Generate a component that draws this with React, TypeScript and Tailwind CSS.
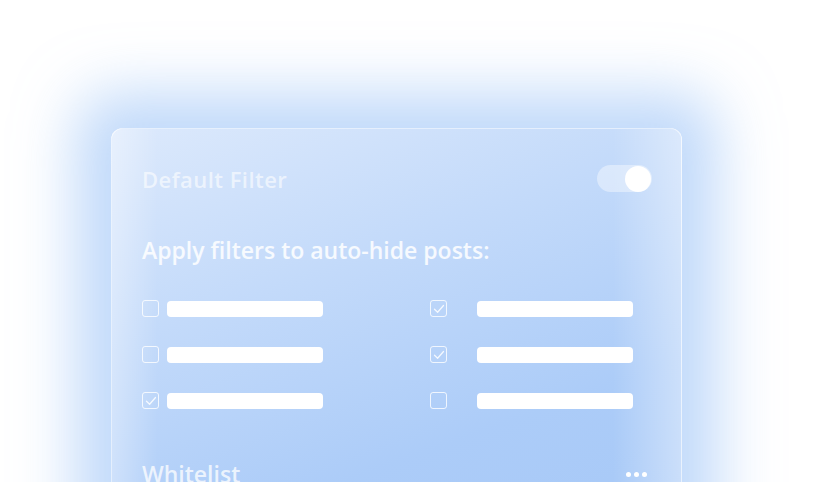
import React from "react";

const Check = ({ checked }: { checked: boolean }) => (
  <div className="w-[17px] h-[17px] rounded-[3px] border-[1.5px] border-white/80 flex items-center justify-center shrink-0">
    {checked && (
      <svg width="12" height="10" viewBox="0 0 12 10" fill="none">
        <path d="M1.5 5.2 L4.6 8.2 L10.5 1.5" stroke="white" strokeOpacity="0.85" strokeWidth="1.3" strokeLinecap="round" strokeLinejoin="round" />
      </svg>
    )}
  </div>
);

const Row = ({ checked, wide }: { checked: boolean; wide?: boolean }) => (
  <div className={`flex items-center h-[17px] ${wide ? "gap-[30px]" : "gap-2"}`}>
    <Check checked={checked} />
    <div className="w-[156px] h-[16px] rounded-[4px] bg-white" />
  </div>
);

export default function App() {
  return (
    <div className="w-[828px] h-[482px] overflow-hidden bg-white relative" style={{ fontFamily: '"Open Sans", "Noto Sans", sans-serif' }}>
      <div className="ml-[111px] mt-[128px] w-[571px] h-[420px] rounded-[12px] border border-white/70 bg-[linear-gradient(160deg,#dce9fc_0%,#c3dafa_35%,#acccf8_70%,#a6c8f7_100%)] shadow-[0_0_60px_35px_rgba(140,185,245,0.55)] relative overflow-hidden">
        <div className="absolute inset-0 bg-[linear-gradient(90deg,rgba(255,255,255,0.35)_0%,rgba(255,255,255,0)_8%,rgba(255,255,255,0)_88%,rgba(255,255,255,0.4)_100%)]" />
        <div className="relative px-[30px] pt-[36px]">
          <div className="flex items-center justify-between h-[27px]">
            <span className="text-[22px] font-semibold leading-none text-white/60 tracking-[0.45px]">Default Filter</span>
            <div className="w-[55px] h-[27px] rounded-full bg-white/40 flex items-center justify-end pr-[1px] -mr-[1px]">
              <div className="w-[26px] h-[26px] rounded-full bg-white" />
            </div>
          </div>
          <div className="mt-[47px] text-[23px] font-semibold leading-none text-white/85">Apply filters to auto-hide posts:</div>
          <div className="mt-[38px] grid grid-cols-[288px_1fr] gap-y-[29px]">
            <Row checked={false} />
            <Row checked={true} wide />
            <Row checked={false} />
            <Row checked={true} wide />
            <Row checked={true} />
            <Row checked={false} wide />
          </div>
          <div className="mt-[54px] flex items-center justify-between">
            <span className="text-[23px] font-semibold leading-none text-white/75">Whitelist</span>
            <div className="flex gap-[3px] mr-[4px]">
              <div className="w-[5px] h-[5px] rounded-full bg-white" />
              <div className="w-[5px] h-[5px] rounded-full bg-white" />
              <div className="w-[5px] h-[5px] rounded-full bg-white" />
            </div>
          </div>
        </div>
      </div>
    </div>
  );
}
